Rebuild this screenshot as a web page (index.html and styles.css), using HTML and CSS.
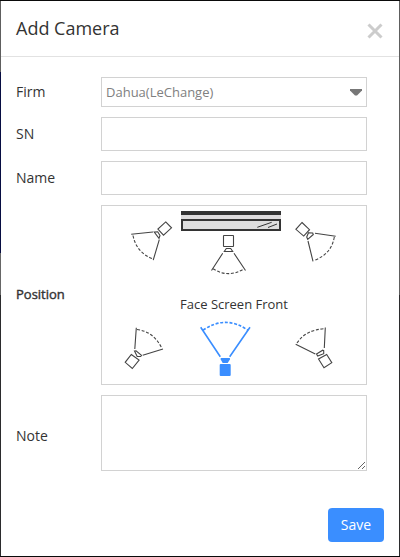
FILE: index.html
```html
<!DOCTYPE html>
<html>
<head>
    <meta charset="utf-8">
    <title>Add Camera</title>
    <link rel="stylesheet" href="styles.css">
</head>
<body>
    <div class="modal">
        <div class="modal-header">
            <span class="title">Add Camera</span>
            <svg class="close" width="16" height="16" viewBox="0 0 16 16">
                <path d="M1.5 1.5L14.5 14.5M14.5 1.5L1.5 14.5"/>
            </svg>
        </div>
        <form class="modal-body">
            <div class="row">
                <label>Firm</label>
                <div class="field select">
                    <span>Dahua(LeChange)</span>
                    <svg width="12" height="7" viewBox="0 0 12 7"><path d="M0 0H12V1.5L7 6.5H5L0 1.5Z"/></svg>
                </div>
            </div>
            <div class="row">
                <label>SN</label>
                <input class="field" type="text">
            </div>
            <div class="row">
                <label>Name</label>
                <input class="field" type="text">
            </div>
            <div class="row">
                <label class="strong">Position</label>
                <div class="field position">
                    <svg width="264" height="178" viewBox="102 206 264 178">
                        <!-- screen -->
                        <g class="screen">
                            <rect x="181" y="211" width="100" height="20" fill="#333"/>
                            <rect x="181" y="215" width="100" height="4" fill="#dedcdd"/>
                            <rect x="183" y="221" width="96" height="8" fill="#ddd"/>
                            <path d="M257.3 227.3L271.7 222.3M268 227.5L277 224" stroke="#333"/>
                        </g>
                        <!-- left front -->
                        <g class="cam">
                            <path d="M165.7 221.9L171.5 227.8L163.5 235.2L157.9 229Z"/>
                            <path d="M154.2 232L157.7 231.8L160 235.5L159 238.3Z"/>
                            <path d="M153 232L131.2 234.3M159.3 239.7L153.2 260.2"/>
                            <path class="dash" d="M133 235.5Q136.5 253 153.3 259"/>
                        </g>
                        <!-- middle front -->
                        <g class="cam">
                            <rect x="223.5" y="235.5" width="10" height="11" rx="0.5"/>
                            <path d="M226.3 248.5H230.7L232.7 251.5H224.3Z"/>
                            <path d="M222.7 253.3L211.5 270.5M234 253.3L245.5 270.5"/>
                            <path class="dash" d="M213 268.8Q228.5 278.5 244 268.8"/>
                        </g>
                        <!-- right front -->
                        <g class="cam">
                            <path d="M302 222.5L309.5 229.7L303.7 236.1L295.9 229.3Z"/>
                            <path d="M308.5 232.7L312.7 233L313.3 234.5L307.7 239.3L306.7 237Z"/>
                            <path d="M315 233.3L335.7 236.2M308 241L313 261.3"/>
                            <path class="dash" d="M334.3 237Q331.5 254 314.3 260.3"/>
                        </g>
                        <text x="234" y="309" text-anchor="middle">Face Screen Front</text>
                        <!-- left back -->
                        <g class="cam">
                            <path d="M131.3 354.5L139.1 360L132.3 368.5L125.2 362.3Z"/>
                            <path d="M134.5 351L136 350.9L141.5 355.3L140.7 356.5H137.2Z"/>
                            <path d="M134.8 349L136.3 327.7M142.7 355.3L163 349"/>
                            <path class="dash" d="M137 329.5Q153.5 331.5 161.7 348"/>
                        </g>
                        <!-- middle back, selected -->
                        <g class="cam active">
                            <rect class="fill" x="219.7" y="364" width="11" height="12" rx="1"/>
                            <path class="fill" d="M220.7 358H229.9V359.5L227.7 363H222.7L220.7 359.5Z"/>
                            <path d="M220.3 356.7L200.7 327.3M229.7 356.7L250 327.3"/>
                            <path class="dash" d="M203 330.3Q225.3 314.5 248 330.3"/>
                        </g>
                        <!-- right back -->
                        <g class="cam">
                            <path d="M326.7 354.5L331.8 362.7L324 367.8L318.5 359Z"/>
                            <path d="M316.5 354L322.7 350.2L323.7 350.7V353.7L317.7 356Z"/>
                            <path d="M324.3 348L325.3 327.5M315.3 354L295.7 344.3"/>
                            <path class="dash" d="M297 343Q306 329.5 325 328.7"/>
                        </g>
                    </svg>
                </div>
            </div>
            <div class="row">
                <label class="note-label">Note</label>
                <textarea class="field note"></textarea>
            </div>
        </form>
        <div class="modal-footer">
            <button class="save" type="button">Save</button>
        </div>
    </div>
</body>
</html>
```
FILE: styles.css
```css
*{
    box-sizing:border-box;
}
body{
    margin:0;
    padding:1px;
    height:557px;
    overflow:hidden;
    font-family:"Open Sans","Liberation Sans",sans-serif;
    font-size:14px;
    color:#333;
    background:
        linear-gradient(#0a0a0a,#0a0a0a) 0 0/100% 1px no-repeat,
        linear-gradient(#0a0a0a,#0a0a0a) 0 100%/100% 1px no-repeat,
        linear-gradient(#5e5e5e 72px,#070d42 72px,#070d42 253px,#666 253px,#666 295px,#2b2b2d 295px) 0 0/1px 100% no-repeat,
        linear-gradient(#5e5e5e 295px,#2b2b2d 295px) 100% 0/1px 100% no-repeat;
}
.modal{
    height:555px;
    background-color:#fff;
}
.modal-header{
    display:flex;
    align-items:center;
    justify-content:space-between;
    height:56px;
    padding:0 16px 0 15px;
    border-bottom:1px solid #e2e2e2;
}
.title{
    padding-bottom:2px;
    font-size:18px;
}
.close{
    margin-top:4px;
    stroke:#ccc;
    stroke-width:3;
}
.modal-body{
    display:flex;
    flex-direction:column;
    gap:10px;
    padding:20px 32px 0 15px;
}
.row{
    display:flex;
    align-items:center;
}
.row label{
    width:85px;
    padding-bottom:2px;
}
.row .strong{
    font-size:13px;
    -webkit-text-stroke:0.4px #333;
}
.row .note-label{
    padding:4px 0 0;
}
.field{
    display:block;
    width:266px;
    height:34px;
    margin:0;
    padding:0 5px;
    border:1px solid #d2d2d2;
    border-radius:0;
    background-color:#fff;
    font-family:inherit;
    outline:none;
}
.select{
    display:flex;
    align-items:center;
    justify-content:space-between;
    height:30px;
    padding:0 4px;
    font-size:13px;
    color:#808080;
}
.select svg{
    margin-top:1px;
    fill:#777;
}
.position{
    height:180px;
    padding:0;
}
.position svg{
    display:block;
}
.position text{
    font-size:13px;
    fill:#333;
}
.cam{
    fill:none;
    stroke:#444;
    stroke-width:1.1;
}
.cam .dash{
    stroke-dasharray:3 1.7;
}
.active{
    stroke:#3a8eff;
    stroke-width:1.6;
}
.active .fill{
    fill:#3a8eff;
    stroke:none;
}
.note{
    height:76px;
    resize:both;
}
.modal-footer{
    display:flex;
    justify-content:flex-end;
    padding:37px 15px 0;
}
.save{
    width:56px;
    height:34px;
    padding:0 0 2px;
    border:0;
    border-radius:4px;
    background-color:#3a8eff;
    color:#fff;
    font-family:inherit;
    font-size:14px;
}
```
